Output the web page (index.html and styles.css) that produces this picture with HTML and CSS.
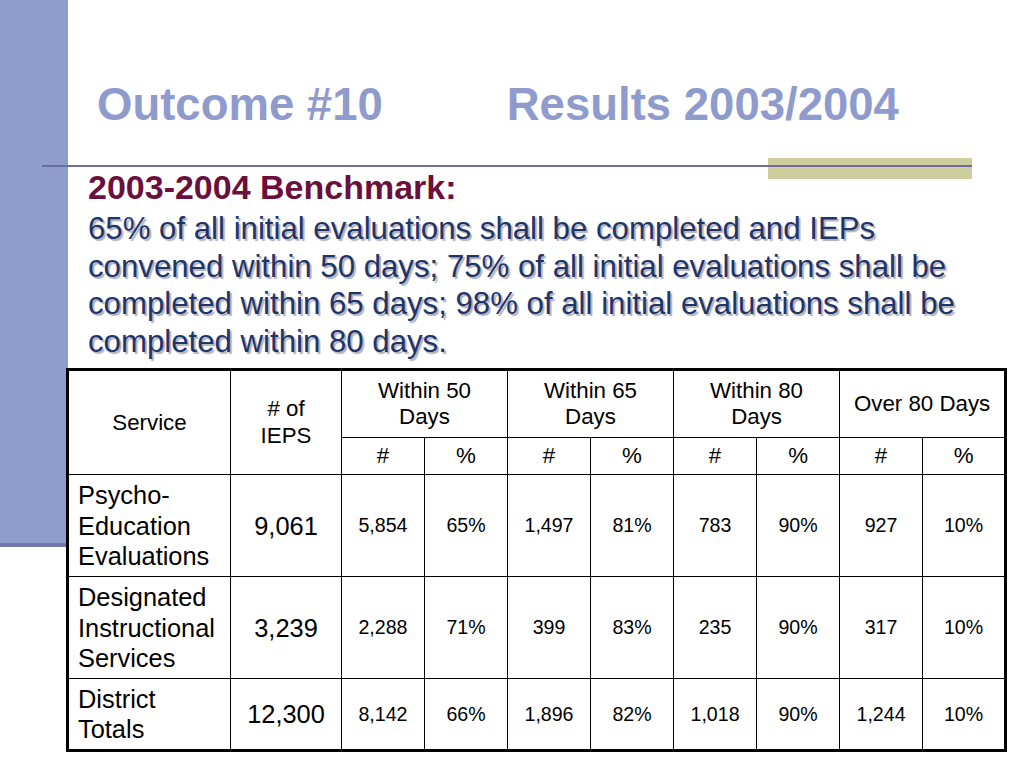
FILE: index.html
```html
<!DOCTYPE html>
<html lang="en">
<head>
<meta charset="utf-8">
<title>Outcome #10 Results 2003/2004</title>
<link rel="stylesheet" href="styles.css">
</head>
<body>
<div class="slide">
  <div class="side-bar"></div>
  <div class="accent-block"></div>
  <div class="rule"></div>
  <div class="content">
    <h1 class="title"><span>Outcome #10</span><span>Results 2003/2004</span></h1>
    <div class="bench">
      <p class="bench-head">2003-2004 Benchmark:</p>
      <p class="bench-text">65% of all initial evaluations shall be completed and IEPs<br>convened within 50 days; 75% of all initial evaluations shall be<br>completed within 65 days; 98% of all initial evaluations shall be<br>completed within 80 days.</p>
    </div>
    <table class="results">
      <colgroup>
        <col class="c-service">
        <col class="c-ieps">
        <col class="c-num"><col class="c-num">
        <col class="c-num"><col class="c-num">
        <col class="c-num"><col class="c-num">
        <col class="c-num"><col class="c-num">
      </colgroup>
      <thead>
        <tr class="h1">
          <th rowspan="2">Service</th>
          <th rowspan="2"># of<br>IEPS</th>
          <th colspan="2">Within 50<br>Days</th>
          <th colspan="2">Within 65<br>Days</th>
          <th colspan="2">Within 80<br>Days</th>
          <th colspan="2">Over 80 Days</th>
        </tr>
        <tr class="h2">
          <th>#</th><th>%</th>
          <th>#</th><th>%</th>
          <th>#</th><th>%</th>
          <th>#</th><th>%</th>
        </tr>
      </thead>
      <tbody>
        <tr class="r-tall">
          <td class="svc">Psycho-<br>Education<br>Evaluations</td>
          <td class="big">9,061</td>
          <td>5,854</td><td>65%</td>
          <td>1,497</td><td>81%</td>
          <td>783</td><td>90%</td>
          <td>927</td><td>10%</td>
        </tr>
        <tr class="r-tall">
          <td class="svc">Designated<br>Instructional<br>Services</td>
          <td class="big">3,239</td>
          <td>2,288</td><td>71%</td>
          <td>399</td><td>83%</td>
          <td>235</td><td>90%</td>
          <td>317</td><td>10%</td>
        </tr>
        <tr class="r-short">
          <td class="svc">District<br>Totals</td>
          <td class="big">12,300</td>
          <td>8,142</td><td>66%</td>
          <td>1,896</td><td>82%</td>
          <td>1,018</td><td>90%</td>
          <td>1,244</td><td>10%</td>
        </tr>
      </tbody>
    </table>
  </div>
</div>
</body>
</html>
```
FILE: styles.css
```css
html, body {
  margin: 0;
  padding: 0;
  background: #ffffff;
}

.slide {
  position: relative;
  width: 1024px;
  height: 768px;
  overflow: hidden;
  background: #ffffff;
  font-family: "Liberation Sans", Arial, Helvetica, sans-serif;
}

/* decorative slide-master shapes */
.side-bar {
  position: absolute;
  left: 0;
  top: 0;
  width: 68px;
  height: 543px;
  background: #8f9dcc;
  border-bottom: 4px solid #7378ab;
}

.accent-block {
  position: absolute;
  left: 768px;
  top: 158px;
  width: 204px;
  height: 21px;
  background: #cdcd9d;
}

.rule {
  position: absolute;
  left: 42px;
  top: 165px;
  width: 930px;
  height: 2px;
  background: #6c6c9e;
}

.content {
  position: relative;
  z-index: 1;
  padding-top: 78px;
}

.title {
  display: flex;
  gap: 124px;
  margin: 0 0 0 97px;
  font-size: 45.5px;
  line-height: 54.6px;
  font-weight: bold;
  color: #8e9bcc;
  white-space: nowrap;
}

.bench {
  margin: 34px 0 0 88px;
}

.bench-head {
  margin: 0;
  font-size: 34px;
  line-height: 40.8px;
  font-weight: bold;
  color: #6b0f3c;
  white-space: nowrap;
}

.bench-text {
  margin: 3px 0 0 0;
  font-size: 31.2px;
  line-height: 37.5px;
  color: #1f3569;
  text-shadow: 2px 2px 1px #b0b0ba;
  white-space: nowrap;
}

.results {
  margin: 8px 0 0 66px;
  width: 938px;
  table-layout: fixed;
  border-collapse: collapse;
  border: 3px solid #000;
  background: #fff;
  color: #000;
}

.c-service { width: 163px; }
.c-ieps { width: 111px; }
.c-num { width: 83px; }

.results th,
.results td {
  border: 1px solid #000;
  padding: 0;
  text-align: center;
  vertical-align: middle;
  font-weight: normal;
  line-height: 1.2;
}

.results th {
  font-size: 22.3px;
}

.results td {
  font-size: 19.6px;
}

.results tr.h1 { height: 68px; }
.results tr.h2 { height: 37px; }
.results tr.r-tall { height: 102px; }
.results tr.r-short { height: 72px; }

.results td.svc {
  text-align: left;
  padding-left: 9px;
  font-size: 25.4px;
}

.results td.big {
  font-size: 25.4px;
}
```
